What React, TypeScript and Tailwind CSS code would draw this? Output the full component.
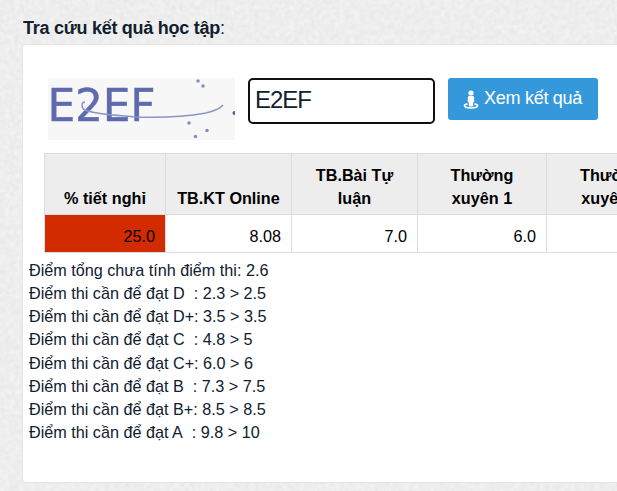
import React from "react";

const columns: { title: string; value: string; width: string; alert?: boolean }[] = [
  { title: "% tiết nghỉ", value: "25.0", width: "w-[121px]", alert: true },
  { title: "TB.KT Online", value: "8.08", width: "w-[126px]" },
  { title: "TB.Bài Tự luận", value: "7.0", width: "w-[126px]" },
  { title: "Thường xuyên 1", value: "6.0", width: "w-[129px]" },
  { title: "Thường xuyên 2", value: "", width: "w-[130px]" },
];

const targets = [
  "Điểm tổng chưa tính điểm thi: 2.6",
  "Điểm thi cần để đạt D\u00a0 : 2.3 > 2.5",
  "Điểm thi cần để đạt D+: 3.5 > 3.5",
  "Điểm thi cần để đạt C\u00a0 : 4.8 > 5",
  "Điểm thi cần để đạt C+: 6.0 > 6",
  "Điểm thi cần để đạt B\u00a0 : 7.3 > 7.5",
  "Điểm thi cần để đạt B+: 8.5 > 8.5",
  "Điểm thi cần để đạt A\u00a0 : 9.8 > 10",
];

function PaperGrain() {
  return (
    <svg className="absolute inset-0 h-full w-full" aria-hidden="true">
      <filter id="grain" colorInterpolationFilters="sRGB">
        <feTurbulence type="fractalNoise" baseFrequency="0.2" numOctaves="3" seed="4" />
        <feColorMatrix values="0.06 0 0 0 0.902  0.06 0 0 0 0.902  0.06 0 0 0 0.902  0 0 0 0 1" />
      </filter>
      <rect width="100%" height="100%" filter="url(#grain)" />
    </svg>
  );
}

function StreetViewIcon() {
  return (
    <svg width="16" height="20" viewBox="0 0 16 20" fill="currentColor" className="mr-[5px] mt-[2px] shrink-0" aria-hidden="true">
      <circle cx="8" cy="3" r="2.600" />
      <path d="M6.500 6h3c1.100 0 1.700.7 1.700 1.700v3.500c0 .6-.4 1.100-1 1.100v3.200c0 .6-.4 1-1 1H6.800c-.6 0-1-.4-1-1v-3.200c-.6 0-1-.5-1-1.100V7.700c0-1 .6-1.700 1.700-1.700z" />
      <path d="M4.500 13.800C2.600 14.200 1.500 14.800 1.500 15.600c0 1.400 2.900 2.400 6.500 2.400s6.500-1 6.500-2.400c0-.8-1.100-1.400-3-1.800" fill="none" stroke="currentColor" strokeWidth="1.700" />
    </svg>
  );
}

function Captcha() {
  return (
    <svg width="187" height="62" viewBox="0 0 187 62" className="shrink-0 bg-[#f7f7f7]">
      <filter id="soften">
        <feGaussianBlur stdDeviation="0.6" />
      </filter>
      <g filter="url(#soften)">
        <text x="-0.5" y="42.500" fontSize="44" textLength="108" lengthAdjust="spacing" fill="#5e6bad" stroke="#5e6bad" strokeWidth="0.4" className="font-['DejaVu_Sans',sans-serif]">
          E2EF
        </text>
        <path d="M37 24C33 24 33 30 37 32C46 36 65 37 87 39C112 40 135 39 158 35C166 33 172 31 175 27" fill="none" stroke="#8c96c6" strokeWidth="1.5" />
        <g fill="#8590c5">
          <circle cx="150" cy="3" r="1.8" />
          <circle cx="155" cy="8" r="1.8" />
          <circle cx="141" cy="45" r="1.8" />
          <circle cx="159" cy="52.5" r="1.8" />
          <circle cx="147.5" cy="58.5" r="1.8" />
          <circle cx="186.5" cy="35" r="2" fill="#4f5da6" />
        </g>
      </g>
    </svg>
  );
}

export default function App() {
  return (
    <div className="relative h-[491px] w-full overflow-hidden bg-[#ededed] font-['Liberation_Sans',Arial,sans-serif] text-[16.2px] leading-[23.14px] text-[#10202f]">
      <PaperGrain />
      <main className="relative pl-[23px] pt-[17px]">
        <h1 className="h-[28px] text-[18px] leading-[23px] tracking-[-0.27px]">
          <b>Tra cứu kết quả học tập</b>:
        </h1>
        <section className="h-[437px] w-[700px] rounded-[3px] bg-white shadow-[0_0_0_1px_#e5e5e5,0_1px_1px_#d8d8d8]">
          <div className="flex items-start pl-[25px] pt-[33px]">
            <Captcha />
            <input
              readOnly
              value="E2EF"
              className="ml-[13px] h-[46px] w-[187px] rounded-[5px] border-2 border-[#101010] bg-white pb-[3px] pl-[5px] text-[24px] tracking-[-1px] outline-none"
            />
            <button className="ml-[13px] flex h-[42px] w-[150px] items-center rounded-[3px] bg-[#3498db] pb-px pl-[15px] text-[18px] tracking-[-0.27px] text-white">
              <StreetViewIcon />
              <span>Xem kết quả</span>
            </button>
          </div>
          <table className="ml-[21px] mt-[13px] w-[633px] table-fixed border-collapse text-black">
            <thead>
              <tr className="h-[61px] bg-[#ededed]">
                {columns.map((c) => (
                  <th key={c.title} className={`${c.width} border border-[#ddd] px-[10px] pb-[4px] pt-[9px] text-center align-bottom font-bold`}>
                    {c.title}
                  </th>
                ))}
              </tr>
            </thead>
            <tbody>
              <tr className="h-[38px]">
                {columns.map((c) => (
                  <td key={c.title} className={`border border-[#ddd] pb-0 pl-[10px] pr-[10px] pt-[7px] text-right ${c.alert ? "bg-[#d22b00]" : ""}`}>
                    {c.value}
                  </td>
                ))}
              </tr>
            </tbody>
          </table>
          <div className="pl-[6px] pt-[6px]">
            {targets.map((line) => (
              <p key={line}>{line}</p>
            ))}
          </div>
        </section>
      </main>
    </div>
  );
}
